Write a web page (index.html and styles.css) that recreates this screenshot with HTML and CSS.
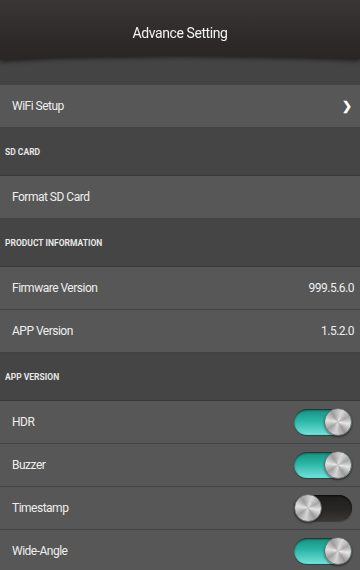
FILE: index.html
```html
<!DOCTYPE html>
<html lang="en">
<head>
  <meta charset="UTF-8">
  <meta name="viewport" content="width=device-width, initial-scale=1.0">
  <title>Advance Setting</title>
  <link rel="stylesheet" href="styles.css">
</head>
<body>
  <div class="topbar-wrap">
    <header class="topbar">
      <h1>Advance Setting</h1>
    </header>
  </div>

  <div class="settings">
    <div class="row link">
      <span class="label">WiFi Setup</span>
      <span class="chevron">&#x276F;</span>
    </div>

    <div class="section">SD CARD</div>
    <div class="row">
      <span class="label">Format SD Card</span>
    </div>

    <div class="section">PRODUCT INFORMATION</div>
    <div class="row">
      <span class="label">Firmware Version</span>
      <span class="value">999.5.6.0</span>
    </div>
    <div class="row">
      <span class="label">APP Version</span>
      <span class="value">1.5.2.0</span>
    </div>

    <div class="section">APP VERSION</div>
    <div class="row">
      <span class="label">HDR</span>
      <div class="switch on"><div class="knob"></div></div>
    </div>
    <div class="row">
      <span class="label">Buzzer</span>
      <div class="switch on"><div class="knob"></div></div>
    </div>
    <div class="row">
      <span class="label">Timestamp</span>
      <div class="switch"><div class="knob"></div></div>
    </div>
    <div class="row">
      <span class="label">Wide-Angle</span>
      <div class="switch on"><div class="knob"></div></div>
    </div>
  </div>
</body>
</html>
```

FILE: styles.css
```css
body {
  margin: 0;
  font-family: Roboto, 'Liberation Sans', sans-serif;
  background: #444444;
  color: #eeeeee;
  height: 570px;
  overflow: hidden;
}

.topbar-wrap {
  filter: drop-shadow(0 2px 2px rgba(0, 0, 0, 0.55));
}

.topbar {
  height: 61px;
  background: linear-gradient(180deg, #3a3636, #2d2929 70%, #2a2626);
  clip-path: polygon(0 0, 100% 0, 100% 59px, 85% 57px, 50% 55px, 15% 57px, 0 60px);
  display: flex;
  justify-content: center;
  padding-top: 24px;
  box-sizing: border-box;
}

.topbar h1 {
  margin: 0;
  font-size: 14px;
  font-weight: normal;
  letter-spacing: -0.4px;
  color: #f2f2f2;
  line-height: 18px;
}

.settings {
  margin-top: 24px;
}

.row {
  height: 42px;
  display: flex;
  align-items: center;
  justify-content: space-between;
  padding: 0 6px 0 12px;
  background: #575757;
  border-bottom: 1px solid #434343;
}

.row:last-child {
  border-bottom: none;
}

.label,
.value {
  font-size: 12px;
  letter-spacing: -0.5px;
  color: #eeeeee;
}

.chevron {
  font-size: 12px;
  font-weight: bold;
  color: #ffffff;
  margin-right: 2px;
}

.section {
  height: 48px;
  display: flex;
  align-items: center;
  padding-left: 5px;
  background: #454545;
  border-bottom: 1px solid #3a3a3a;
  box-sizing: border-box;
  font-size: 8.5px;
  font-weight: bold;
  color: #e6e6e6;
}

.switch {
  width: 58px;
  height: 26px;
  border-radius: 13px;
  background: linear-gradient(180deg, #1f1c1c, #2a2727 60%, #3a3737);
  box-shadow: inset 0 1px 2px rgba(0, 0, 0, 0.7), 0 1px 1px rgba(0, 0, 0, 0.3);
  display: flex;
  align-items: center;
  justify-content: flex-start;
  margin-right: 2px;
}

.switch.on {
  background: linear-gradient(180deg, #14907f, #2bb5a6 45%, #72e2da);
  justify-content: flex-end;
}

.knob {
  width: 28px;
  height: 28px;
  flex-shrink: 0;
  border-radius: 50%;
  box-sizing: border-box;
  border: 1px solid #6b6b6b;
  background:
    radial-gradient(circle, rgba(255, 255, 255, 0.35) 0, rgba(255, 255, 255, 0) 35%),
    conic-gradient(from 20deg, #d8d8d8, #a6a6a6 12%, #e6e6e6 22%, #9a9a9a 35%, #d4d4d4 48%, #a0a0a0 60%, #e2e2e2 72%, #9c9c9c 85%, #d8d8d8);
  box-shadow: 0 1px 2px rgba(0, 0, 0, 0.5);
}
```
